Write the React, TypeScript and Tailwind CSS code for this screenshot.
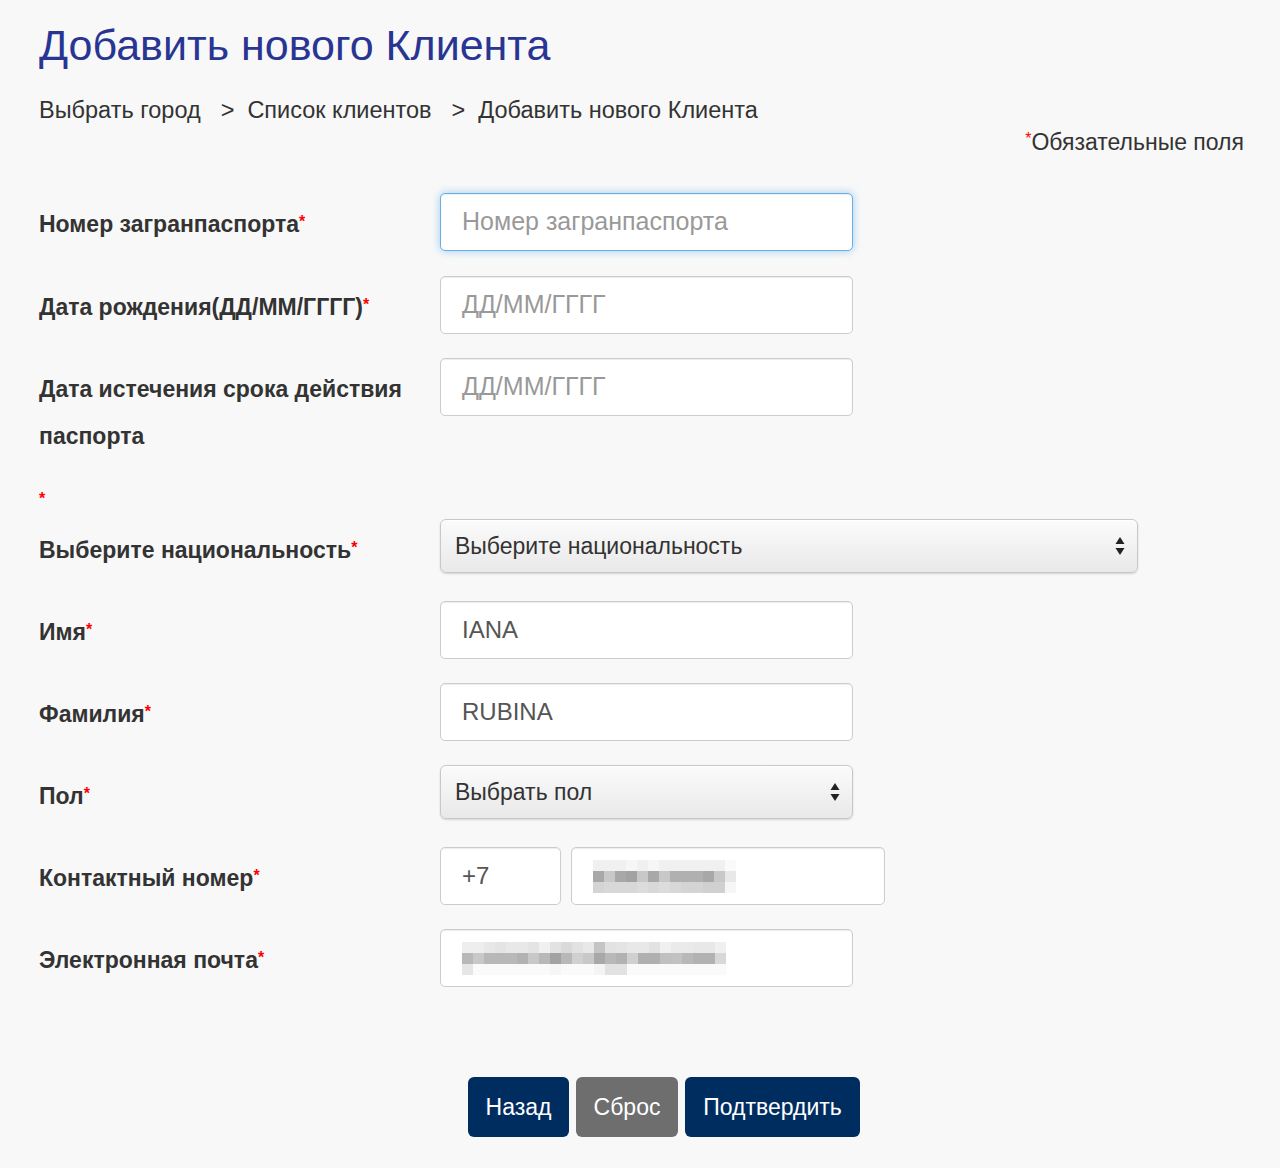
import React from "react";

type Row = {
  label: string
  height: string
  field: React.ReactNode
}

const font = { fontFamily: '"Liberation Sans", Arial, sans-serif' };

const phoneRows: string[][] = [
  ["f0", "f0", "f0", "f6", "f0", "f6", "f0", "f0", "f0", "f0", "f0", "f0", "fa"],
  ["a8", "c8", "a8", "a2", "c8", "a8", "c8", "b0", "b0", "b0", "a8", "c8", "e8"],
  ["d4", "d8", "d8", "d8", "dc", "d8", "dc", "d8", "d4", "d4", "d0", "d0", "f6"],
];

const emailRows: string[][] = [
  ["ee", "ee", "e8", "e4", "e8", "e8", "e4", "f0", "e2", "da", "e2", "e8", "c4", "e2", "e4", "e8", "e8", "e2", "f0", "ea", "ea", "e8", "e8", "f0"],
  ["b8", "c8", "b8", "b8", "b8", "b2", "c8", "b8", "a2", "b8", "d0", "c8", "a8", "b8", "b2", "d0", "b0", "b0", "c0", "c2", "b8", "b2", "b2", "d8"],
  ["e6", "fa", "fa", "fa", "fa", "fa", "fa", "fa", "f6", "fa", "fa", "fa", "f4", "e2", "e2", "fa", "fa", "fa", "fa", "fa", "fa", "fa", "fa", "fa"],
];

function Mosaic({ rows }: { rows: string[][] }) {
  const w = rows[0].length * 11;
  return (
    <svg width={w} height={33} className="block">
      {rows.map((r, y) =>
        r.map((c, x) => <rect key={`${x}-${y}`} x={x * 11} y={y * 11} width={11} height={11} fill={`#${c}${c}${c}`} />)
      )}
    </svg>
  );
}

function Arrows() {
  return (
    <svg width="10" height="22" viewBox="0 0 10 22" className="shrink-0">
      <path d="M5 2 L9.5 9 L0.5 9 Z" fill="#222" />
      <path d="M5 20 L9.5 13 L0.5 13 Z" fill="#222" />
    </svg>
  );
}

function Star() {
  return <span className="text-[#ff0000] text-[16px] align-top relative -top-[3px]">*</span>;
}

const boxCls = "h-[58px] bg-white border rounded-[5px] flex items-center px-[21px] text-[24px]";
const inputCls = `${boxCls} border-[#cccccc] shadow-[inset_0_1px_1px_rgba(0,0,0,0.075)]`;
const focusCls = `${boxCls} border-[#66afe9] shadow-[inset_0_1px_1px_rgba(0,0,0,0.075),0_0_8px_rgba(102,175,233,0.6)]`;
const selectCls = "h-[54px] border border-[#c8c8c8] rounded-[6px] bg-gradient-to-b from-[#fbfbfb] to-[#e9e9e9] shadow-[0_1px_2px_rgba(0,0,0,0.15),inset_0_1px_0_#fff] flex items-center justify-between pl-[14px] pr-[12px] text-[23px] text-[#333]";

export default function App() {
  const rows: Row[] = [
    {
      label: "Номер загранпаспорта",
      height: "h-[83px]",
      field: (
        <div className={`${focusCls} w-[413px] text-[#999] text-[25px]`}>
          Номер загранпаспорта
        </div>
      ),
    },
    {
      label: "Дата рождения(ДД/ММ/ГГГГ)",
      height: "h-[82px]",
      field: <div className={`${inputCls} w-[413px] text-[#999] text-[25px]`}>ДД/ММ/ГГГГ</div>,
    },
  ];

  const rows2: Row[] = [
    {
      label: "Выберите национальность",
      height: "h-[82px]",
      field: (
        <div className={`${selectCls} w-[698px]`}>
          <span>Выберите национальность</span>
          <Arrows />
        </div>
      ),
    },
    {
      label: "Имя",
      height: "h-[82px]",
      field: <div className={`${inputCls} w-[413px] text-[#555]`}>IANA</div>,
    },
    {
      label: "Фамилия",
      height: "h-[82px]",
      field: <div className={`${inputCls} w-[413px] text-[#555]`}>RUBINA</div>,
    },
    {
      label: "Пол",
      height: "h-[82px]",
      field: (
        <div className={`${selectCls} w-[413px]`}>
          <span>Выбрать пол</span>
          <Arrows />
        </div>
      ),
    },
    {
      label: "Контактный номер",
      height: "h-[82px]",
      field: (
        <div className="flex gap-[10px]">
          <div className={`${inputCls} w-[121px] text-[#555]`}>+7</div>
          <div className={`${inputCls} w-[314px]`}>
            <Mosaic rows={phoneRows} />
          </div>
        </div>
      ),
    },
    {
      label: "Электронная почта",
      height: "h-[82px]",
      field: (
        <div className={`${inputCls} w-[413px]`}>
          <Mosaic rows={emailRows} />
        </div>
      ),
    },
  ];

  const renderRow = (r: Row, i: number) => (
    <div key={i} className={`flex items-start ${r.height}`}>
      <div className="w-[401px] pt-[8px] text-[23px] font-bold leading-[47px] text-[#333]">
        {r.label}
        <Star />
      </div>
      {r.field}
    </div>
  );

  return (
    <div className="min-h-[1168px] bg-[#f8f8f8] pl-[39px] pr-[36px]" style={font}>
      <h1 className="pt-[20px] text-[43px] leading-[50px] text-[#283593]">Добавить нового Клиента</h1>

      <div className="mt-[25px] flex items-center text-[23.5px] leading-[30px] text-[#333]">
        <span>Выбрать город</span>
        <span className="ml-[20px] mr-[13px]">&gt;</span>
        <span>Список клиентов</span>
        <span className="ml-[20px] mr-[13px]">&gt;</span>
        <span>Добавить нового Клиента</span>
      </div>

      <div className="mt-[2px] flex justify-end text-[23px] leading-[30px] text-[#333]">
        <span>
          <Star />
          Обязательные поля
        </span>
      </div>

      <div className="mt-[36px] flex flex-col">
        {rows.map(renderRow)}

        <div className="flex items-start h-[161px]">
          <div className="w-[401px] pt-[8px] text-[23px] font-bold leading-[47px] text-[#333]">
            <div>Дата истечения срока действия</div>
            <div>паспорта</div>
            <div className="mt-[34px] leading-[16px]">
              <Star />
            </div>
          </div>
          <div className={`${inputCls} w-[413px] text-[#999] text-[25px]`}>ДД/ММ/ГГГГ</div>
        </div>

        {rows2.map(renderRow)}
      </div>

      <div className="mt-[66px] flex gap-[7px] pl-[429px] text-[23px] text-white">
        <button className="h-[60px] w-[101px] rounded-[6px] bg-[#002d5f]">Назад</button>
        <button className="h-[60px] w-[102px] rounded-[6px] bg-[#6e6e6e]">Сброс</button>
        <button className="h-[60px] w-[175px] rounded-[6px] bg-[#002d5f]">Подтвердить</button>
      </div>
    </div>
  );
}
